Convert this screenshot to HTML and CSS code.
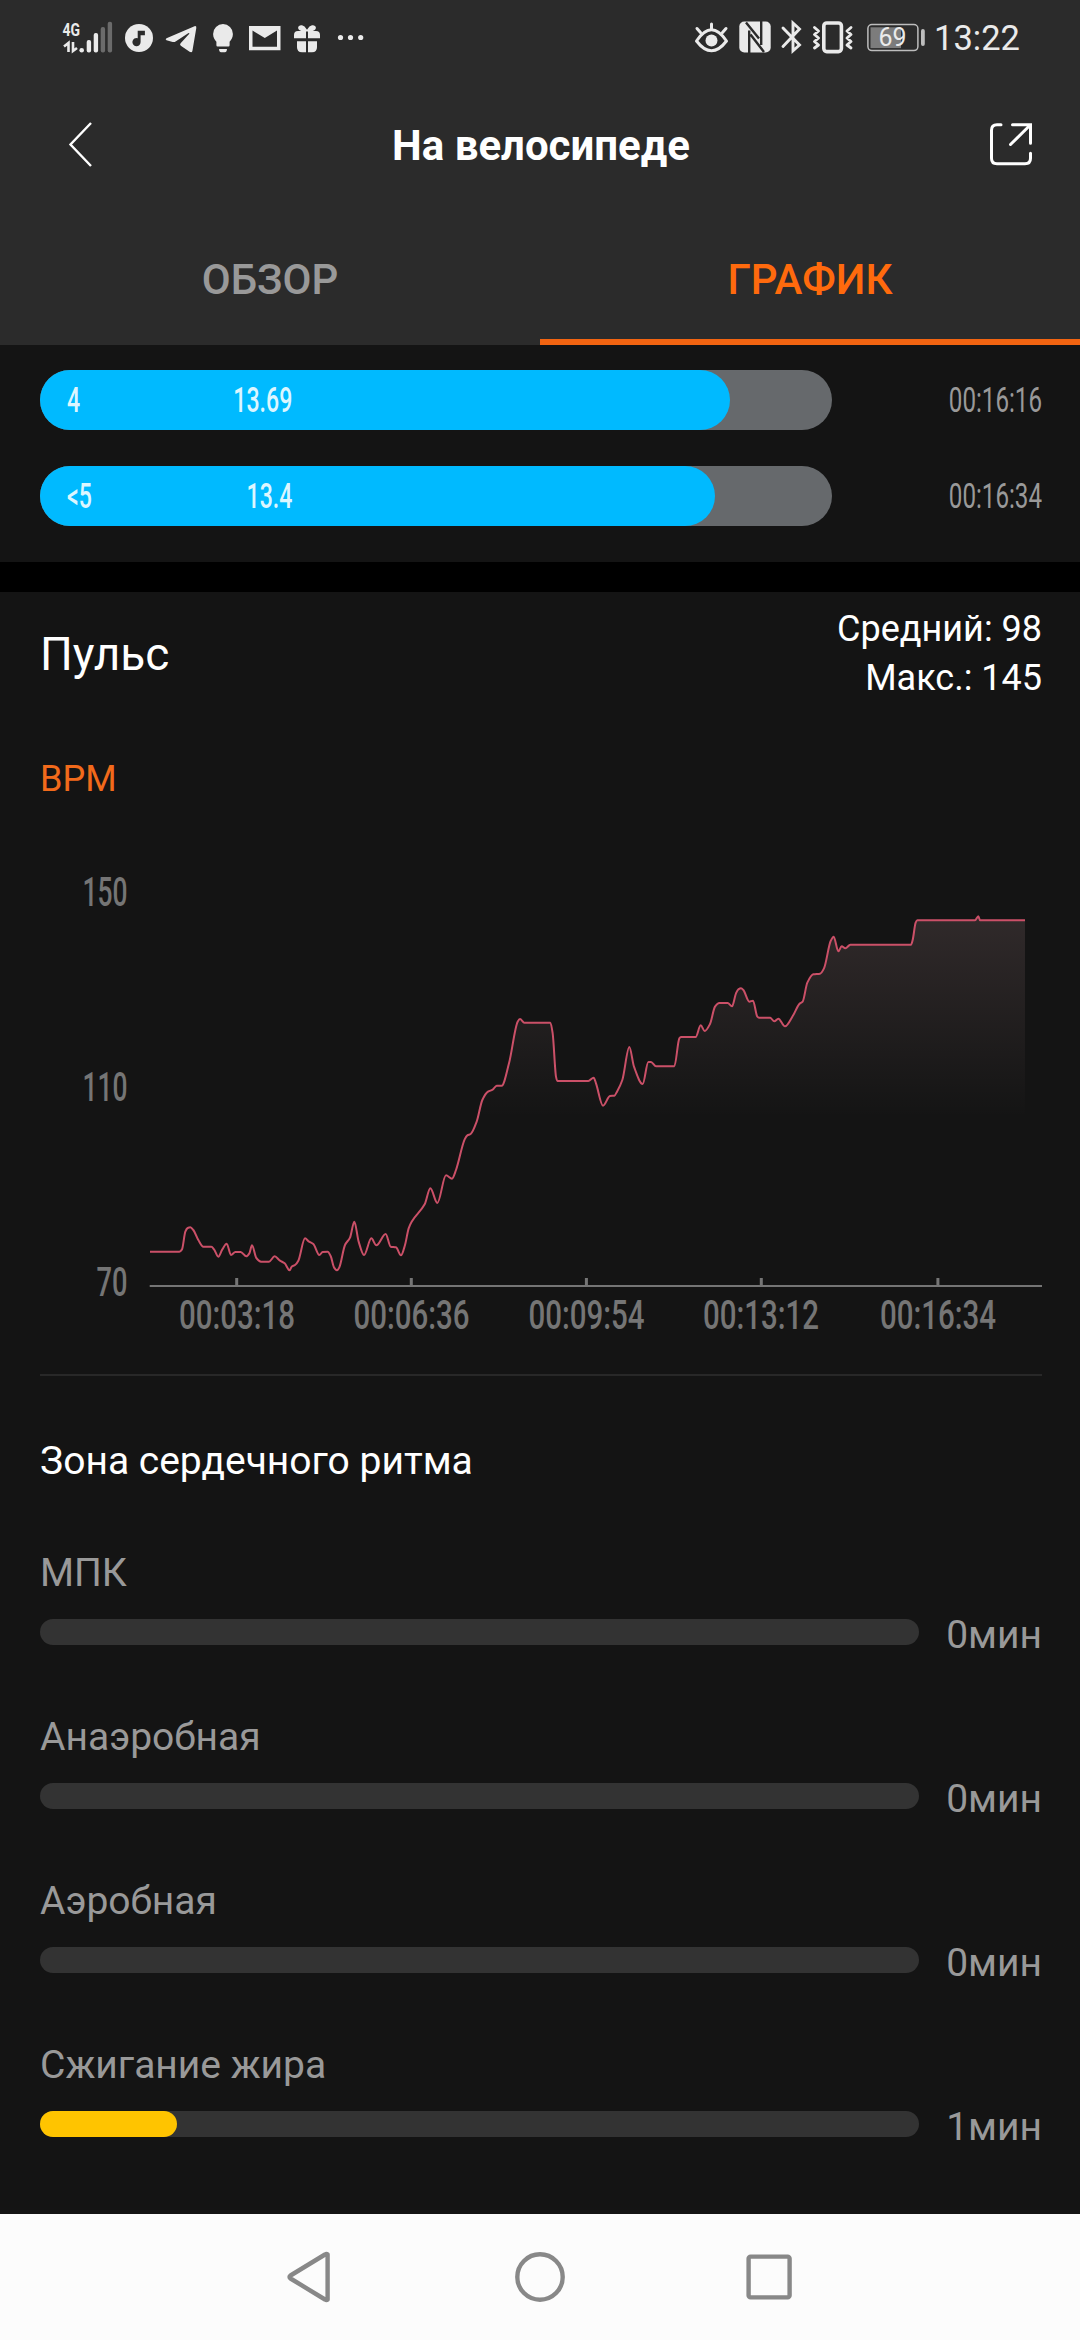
FILE: index.html
```html
<!DOCTYPE html>
<html lang="ru">
<head>
<meta charset="utf-8">
<title>На велосипеде</title>
<link rel="stylesheet" href="styles.css">
</head>
<body>
<div class="screen">
  <div class="status">
    <div class="status-left">
      <svg class="ic" width="50" height="36" viewBox="62 17 50 36">
        <text class="net" x="62.500" y="35.500" textLength="17.500" lengthAdjust="spacingAndGlyphs">4G</text>
        <path d="M68.500 52V43l-4.500 3.500M73 42v9l4-3" fill="none" stroke="#eaeaea" stroke-width="2.600"/>
        <circle cx="81.700" cy="50.200" r="2.300"/>
        <rect x="86.700" y="40" width="4.400" height="12.600" rx="2"/>
        <rect x="93.700" y="33" width="4.400" height="19.600" rx="2"/>
        <rect class="dim" x="100.700" y="27" width="4.400" height="25.600" rx="2"/>
        <rect class="dim" x="107.700" y="21.800" width="4.400" height="30.800" rx="2"/>
      </svg>
      <svg class="ic music" width="28" height="32" viewBox="125 21 28 32">
        <circle cx="139" cy="38" r="14"/>
        <path class="cut" d="M137.700 30.700h7.200v4.600h-4.300v6.800a4.100 4.100 0 1 1-2.900-3.900z"/>
      </svg>
      <svg class="ic tg" width="32" height="32" viewBox="165 21 32 32">
        <path d="M166.500 38.200L194.500 26.200Q196.600 25.600 196.300 28L192.400 51Q191.800 53 189.600 51.800L180.800 45.800Q179.400 44.600 180.600 43.200L189.500 33.400Q189 32.600 187.800 33.400L175.600 41.600Q174 42.500 171.800 41.800L166.500 40.200Q164.800 39.200 166.500 38.200z"/>
      </svg>
      <svg class="ic bulb" width="20" height="32" viewBox="213 21 20 32">
        <path d="M223 24a9.900 9.900 0 0 1 9.900 9.900c0 3.700-1.700 6-3.300 7.800v3.600q0 1.200-1.200 1.200h-10.800q-1.200 0-1.200-1.200v-3.600c-1.600-1.800-3.300-4.100-3.300-7.800A9.900 9.900 0 0 1 223 24zM219 49h8q-.3 3.200-2 3.200h-4q-1.700 0-2-3.200z"/>
      </svg>
      <svg class="ic mail" width="32" height="32" viewBox="249 21 32 32">
        <path fill-rule="evenodd" d="M249 26h31.500v24.300H249zM252.500 30.500v16.300h24.500V30.500L264.800 38z"/>
      </svg>
      <svg class="ic gift" width="26" height="32" viewBox="294 21 26 32">
        <path d="M306 38.300h-12v-3.300q0-4 4-4h3.300q-4-1.500-3-4.200 1-2 3.700-1.500 2.600.5 5 4.400 2.400-3.900 5-4.400 2.700-.5 3.700 1.500 1 2.700-3 4.200h3.300q4 0 4 4v3.300h-12v-6.800h-2zM297 41.300h9v11h-4q-5 0-5-5zM308 41.300h9v6q0 5-5 5h-4z"/>
      </svg>
      <svg class="ic dots" width="26" height="32" viewBox="338 21 26 32">
        <circle cx="340.500" cy="37.500" r="2.600"/><circle cx="350.500" cy="37.500" r="2.600"/><circle cx="360.700" cy="37.500" r="2.600"/>
      </svg>
    </div>
    <div class="status-right">
      <svg class="ic" width="34" height="32" viewBox="695 21 34 32">
        <g fill="none" stroke="#eaeaea" stroke-width="3" stroke-linecap="round">
          <path d="M696.500 41Q711.500 18.500 726.500 41Q711.500 60.500 696.500 41z" stroke-linejoin="round"/>
          <path d="M711.500 24v5M697 28.500l3.500 4M726 28.500l-3.500 4"/>
        </g>
        <circle cx="711.500" cy="40.500" r="6"/>
      </svg>
      <svg class="ic nfc" width="32" height="32" viewBox="739 21 32 32">
        <rect x="739.300" y="21.500" width="31.400" height="31" rx="5"/>
        <path d="M749.200 53.500V30.500M746 22.500L759 38.500M761.200 20v25M750.500 34.500L764 52" fill="none" stroke="#2b2b2b" stroke-width="2.400"/>
      </svg>
      <svg class="ic bt" width="20" height="32" viewBox="781 21 20 32">
        <path d="M783 28l16.500 17-6.500 5.800V23l6.500 6L783 46.500" fill="none" stroke="#eaeaea" stroke-width="2.900" stroke-linecap="round"/>
      </svg>
      <svg class="ic vib" width="41" height="32" viewBox="812 21 41 32">
        <g fill="none" stroke="#eaeaea" stroke-linejoin="round">
          <rect x="823.800" y="23" width="17.600" height="28.600" rx="3" stroke-width="3.600"/>
          <path stroke-width="2.900" stroke-linecap="round" d="M814.500 27.500l4 3.500-4 3.500 4 3.500-4 3.500 4 3.500-4 3M851 27.500l-4 3.500 4 3.500-4 3.500 4 3.500-4 3.500 4 3"/>
        </g>
      </svg>
      <svg class="ic bat" width="58" height="32" viewBox="867 21 58 32">
        <rect x="867.900" y="24.600" width="50" height="26" rx="4" fill="none" stroke="#bdbdbd" stroke-width="1.500"/>
        <rect x="870.500" y="27.300" width="30.500" height="20.800" fill="#7c7c7c"/>
        <rect x="921" y="29" width="3.800" height="17" rx="1.900" fill="#bdbdbd"/>
        <text class="level" x="878.500" y="45.500" textLength="28" lengthAdjust="spacingAndGlyphs">69</text>
      </svg>
      <span class="clock">13:22</span>
    </div>
  </div>

  <header class="bar">
    <svg width="26" height="48" viewBox="67 120 26 48"><path d="M91 123L70.500 144.500L91 166" fill="none" stroke="#fff" stroke-width="2.400"/></svg>
    <h1>На велосипеде</h1>
    <svg width="44" height="44" viewBox="989 122 44 44">
      <path d="M1001 124.700h-4q-5.500 0-5.500 5.500v28q0 5.500 5.500 5.500h28q5.500 0 5.500-5.500v-5M1012.500 124.700h18v18.500M1029.500 125.700L1010.500 144.500" fill="none" stroke="#fff" stroke-width="3" stroke-linecap="round"/>
    </svg>
  </header>

  <nav class="tabs">
    <div class="tab">ОБЗОР</div>
    <div class="tab active">ГРАФИК</div>
  </nav>

  <section class="laps">
    <div class="lap">
      <div class="track"><div class="fill" style="width:690px"><span class="din">4</span><span class="din end">13.69</span></div></div>
      <span class="din end time">00:16:16</span>
    </div>
    <div class="lap">
      <div class="track"><div class="fill" style="width:675px"><span class="din">&lt;5</span><span class="din end">13.4</span></div></div>
      <span class="din end time">00:16:34</span>
    </div>
  </section>

  <section class="pulse">
    <div class="pulse-head">
      <h2>Пульс</h2>
      <div class="stats">Средний: 98<br>Макс.: 145</div>
    </div>
    <div class="unit">BPM</div>
    <svg class="chart" width="1080" height="574" viewBox="0 800 1080 574">
      <defs>
        <linearGradient id="area" gradientUnits="userSpaceOnUse" x1="0" y1="918" x2="0" y2="1118">
          <stop offset="0" stop-color="#ffc8cd" stop-opacity=".12"/>
          <stop offset="1" stop-color="#ffc8cd" stop-opacity="0"/>
        </linearGradient>
      </defs>
      <path id="areaPath" fill="url(#area)"/>
      <path id="linePath" fill="none" stroke="#cb5068" stroke-width="2"/>
      <g class="axis">
        <rect x="149.700" y="1285" width="892.300" height="2"/>
        <rect x="235.200" y="1278" width="3" height="8"/>
        <rect x="409.800" y="1278" width="3" height="8"/>
        <rect x="584.900" y="1278" width="3" height="8"/>
        <rect x="759.800" y="1278" width="3" height="8"/>
        <rect x="936.400" y="1278" width="3" height="8"/>
      </g>
      <g class="ticks">
        <text x="82.500" y="906" textLength="45" lengthAdjust="spacingAndGlyphs">150</text>
        <text x="82.500" y="1101" textLength="45" lengthAdjust="spacingAndGlyphs">110</text>
        <text x="96.500" y="1296" textLength="31" lengthAdjust="spacingAndGlyphs">70</text>
        <text x="179" y="1329" textLength="116" lengthAdjust="spacingAndGlyphs">00:03:18</text>
        <text x="353.500" y="1329" textLength="116" lengthAdjust="spacingAndGlyphs">00:06:36</text>
        <text x="528.500" y="1329" textLength="116" lengthAdjust="spacingAndGlyphs">00:09:54</text>
        <text x="703" y="1329" textLength="116" lengthAdjust="spacingAndGlyphs">00:13:12</text>
        <text x="880" y="1329" textLength="116" lengthAdjust="spacingAndGlyphs">00:16:34</text>
      </g>
    </svg>
  </section>

  <section class="zones">
    <h3>Зона сердечного ритма</h3>
    <div class="zone"><div class="name">МПК</div><div class="line"><div class="meter"></div><span>0мин</span></div></div>
    <div class="zone"><div class="name">Анаэробная</div><div class="line"><div class="meter"></div><span>0мин</span></div></div>
    <div class="zone"><div class="name">Аэробная</div><div class="line"><div class="meter"></div><span>0мин</span></div></div>
    <div class="zone"><div class="name">Сжигание жира</div><div class="line"><div class="meter"><div class="value" style="width:137px"></div></div><span>1мин</span></div></div>
  </section>

  <footer class="sysnav">
    <svg width="506" height="52" viewBox="287 2251 506 52">
      <g fill="none" stroke="#888" stroke-width="4.400" stroke-linejoin="round">
        <path d="M327.600 2254.500V2299.500Q326.500 2300.500 325 2299.500L290.500 2278.500Q288.500 2277 290.500 2275.500L325 2254.500Q326.500 2253.500 327.600 2254.500z"/>
        <circle cx="540" cy="2277" r="22.700"/>
        <rect x="748.600" y="2256.600" width="41" height="40.800" rx="2"/>
      </g>
    </svg>
  </footer>
</div>
<script src="chart.js"></script>
</body>
</html>
```
FILE: styles.css
```css
* { box-sizing: border-box; }
body { margin: 0; background: #141414; font-family: Roboto, "Noto Sans", sans-serif; }
h1, h2, h3 { margin: 0; font-weight: 400; }
svg { display: block; flex: none; }
.screen { width: 1080px; height: 2340px; display: flex; flex-direction: column; overflow: hidden; background: #141414; color: #fff; }

.status { height: 75px; background: #2b2b2b; display: flex; justify-content: space-between; align-items: flex-start; padding: 17px 62px 0; }
.status-left, .status-right { display: flex; align-items: flex-end; height: 36px; }
.ic { fill: #eaeaea; overflow: visible; }
.ic .cut { fill: #2b2b2b; }
.ic .dim { fill: #6b6b6b; }
.net { font-size: 18px; font-weight: 700; }
.level { font-size: 25px; }
.music { margin-left: 13px; }
.tg { margin-left: 12px; }
.bulb { margin-left: 16px; }
.mail { margin-left: 16px; }
.gift { margin-left: 13px; }
.dots { margin-left: 18px; }
.nfc { margin-left: 10px; }
.bt { margin-left: 10px; }
.vib { margin-left: 11px; }
.bat { margin-left: 14px; }
.clock { width: 84px; margin-left: 9px; font-size: 34.500px; line-height: 30px; color: #eaeaea; white-space: nowrap; }

.bar { height: 138px; background: #2b2b2b; display: flex; align-items: center; justify-content: space-between; padding: 0 47px 0 67px; }
.bar h1 { font-size: 42px; font-weight: 700; line-height: 48px; padding-top: 4px; }
.tabs { height: 132px; background: #2b2b2b; display: grid; grid-template-columns: 1fr 1fr; }
.tab { padding-top: 42px; text-align: center; font-size: 42px; line-height: 49px; font-weight: 500; color: #999; }
.tab.active { color: #ff6a0d; border-bottom: 6px solid #f26411; }

.laps { padding: 25px 38px 36px 40px; display: flex; flex-direction: column; gap: 36px; border-bottom: 30px solid #000; height: 247px; }
.lap { display: flex; justify-content: space-between; align-items: center; height: 60px; }
.track { width: 792px; height: 60px; border-radius: 30px; background: #66696c; }
.fill { height: 60px; border-radius: 30px; background: #00baff; display: flex; align-items: center; justify-content: space-between; padding: 0 438px 0 27px; }
.lap:nth-child(2) .fill { padding-right: 423px; }
.din { font-size: 35px; font-weight: 500; line-height: 60px; padding-top: 2px; color: #dcf6ff; transform: scaleX(.66); transform-origin: left center; white-space: nowrap; }
.din.end { transform-origin: right center; }
.din.time { color: #999; font-weight: 400; transform: scaleX(.69); }

.pulse-head { height: 111px; padding: 13px 38px 0 40px; display: flex; justify-content: space-between; align-items: center; }
.pulse-head h2 { font-size: 46px; line-height: 53px; }
.stats { font-size: 36px; line-height: 49px; text-align: right; }
.unit { margin: 55px 0 0 40px; font-size: 36px; line-height: 42px; color: #f26a1b; }
.axis { fill: #757575; }
.ticks { fill: #757575; font-size: 41px; font-weight: 500; }

.zones { margin: 0 38px 0 40px; padding-top: 62px; border-top: 2px solid #282828; flex: 1; }
.zones h3 { font-size: 39px; line-height: 46px; margin-bottom: 66px; }
.zone { margin-bottom: 56px; color: #999; font-size: 39px; line-height: 46px; }
.name { margin-bottom: 16px; }
.line { display: flex; justify-content: space-between; }
.meter { width: 879px; height: 26px; margin-top: 7px; border-radius: 13px; background: #333; }
.value { height: 26px; border-radius: 13px; background: #ffc400; }

.sysnav { height: 126px; background: #fcfcfc; display: flex; justify-content: center; align-items: center; }
```
FILE: chart.js
```js
// Heart-rate samples as x,y pairs in thirds of a pixel, relative to (140, 980).
const raw = `30,815 118,815 126,808 136,755 143,744 151,742 160,750 175,780 190,800 214,800 222,808 235,830 247,808 260,791
273,825 286,816 302,816 319,829 328,820 336,796 349,834 363,845 387,845 404,829 420,842 434,850 449,871 455,860 465,855 475,842
495,775 506,784 520,792 538,825 548,816 563,815 572,828 582,862 591,871 598,862 615,795 630,773 643,725 656,785 672,825 694,775
709,796 737,762 752,800 768,802 783,826 795,795 806,745 815,725 854,673 871,625 892,669 918,586 936,596 948,570 974,478 982,466
992,462 1010,425 1027,360 1044,335 1058,329 1070,317 1085,317 1107,250 1133,125 1140,117 1153,128 1231,128 1238,160 1248,290
1252,303 1345,303 1361,293 1368,310 1389,377 1410,348 1423,347 1431,335 1447,300 1468,201 1482,260 1508,312 1525,246 1533,246
1548,259 1603,259 1618,175 1623,171 1667,171 1682,136 1694,153 1710,132 1725,80 1738,69 1763,69 1776,79 1788,40 1795,28 1803,25
1810,30 1828,65 1839,62 1852,110 1857,113 1890,113 1903,124 1915,116 1935,139 1960,105 1978,72 1988,65 2002,8 2020,-17 2040,-19
2052,-35 2072,-117 2081,-130 2095,-86 2105,-101 2116,-95 2131,-106 2313,-106 2318,-120 2327,-172 2332,-179 2505,-179 2515,-191
2520,-179 2655,-179`;
const p = raw.split(/\s+/).map(s => s.split(',').map(Number)).map(([x, y]) => [140 + x / 3, 980 + y / 3]);
const n = p.length;
const slope = [];
for (let i = 0; i < n - 1; i++) slope.push((p[i + 1][1] - p[i][1]) / (p[i + 1][0] - p[i][0]));
// Monotone tangents keep the curve from overshooting its samples.
const t = p.map((_, i) => {
  if (i === 0 || i === n - 1) return 0;
  const a = slope[i - 1], b = slope[i];
  return a * b <= 0 ? 0 : 2 * a * b / (a + b);
});
let d = `M${p[0][0]} ${p[0][1]}`;
for (let i = 0; i < n - 1; i++) {
  const h = (p[i + 1][0] - p[i][0]) / 3;
  d += `C${p[i][0] + h} ${p[i][1] + t[i] * h} ${p[i + 1][0] - h} ${p[i + 1][1] - t[i + 1] * h} ${p[i + 1][0]} ${p[i + 1][1]}`;
}
document.getElementById('linePath').setAttribute('d', d);
document.getElementById('areaPath').setAttribute('d', `${d}V1285H${p[0][0]}Z`);
```
